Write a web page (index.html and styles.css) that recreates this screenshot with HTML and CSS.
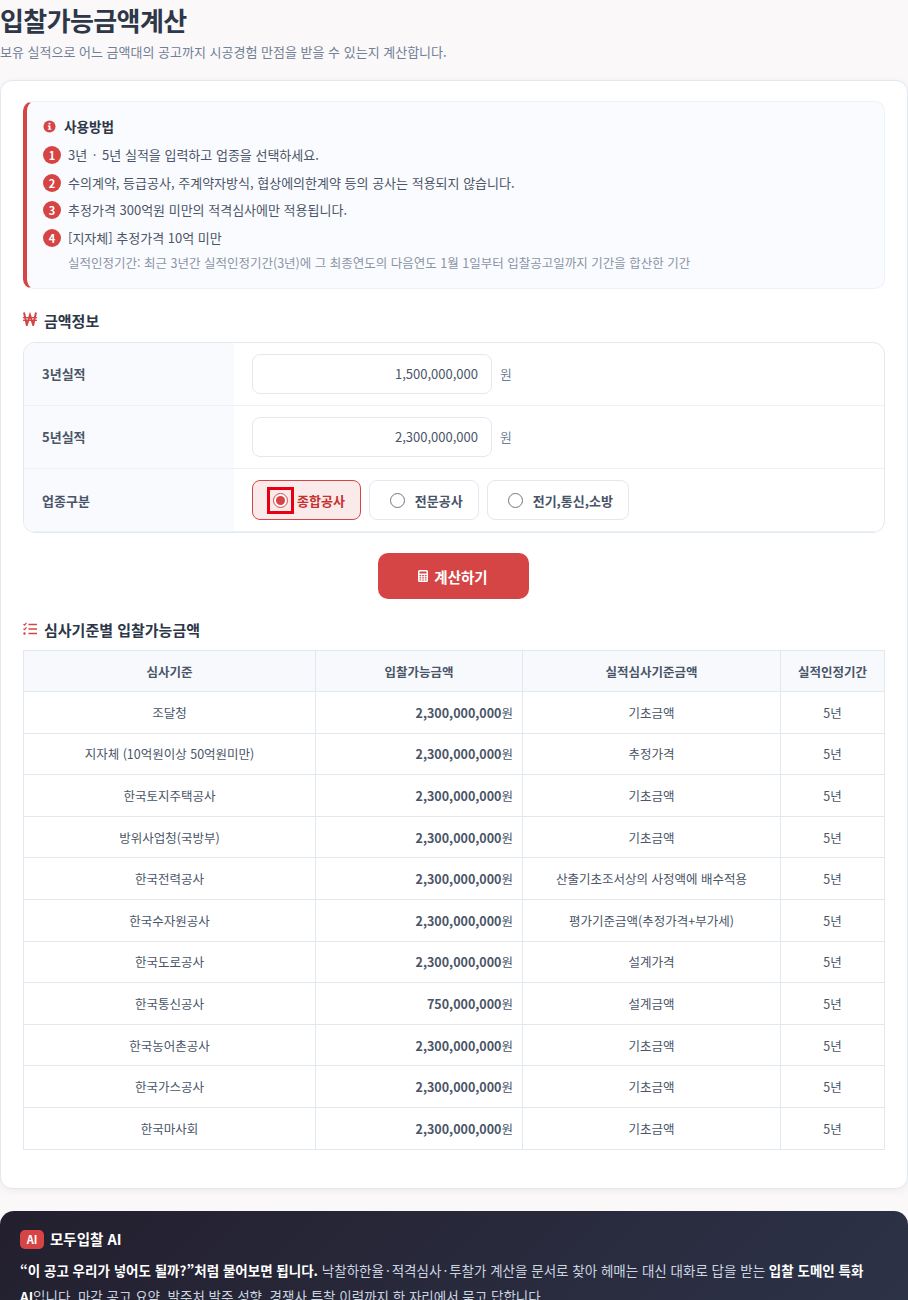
FILE: index.html
```html
<!DOCTYPE html>
<html lang="ko">
<head>
<meta charset="utf-8">
<title>입찰가능금액계산</title>
<link rel="stylesheet" href="styles.css">
</head>
<body>
<header class="page-head">
  <h1>입찰가능금액계산</h1>
  <p>보유 실적으로 어느 금액대의 공고까지 시공경험 만점을 받을 수 있는지 계산합니다.</p>
</header>
<main class="card">
  <section class="guide">
    <h3 class="guide-title">
      <svg class="guide-icon" viewBox="0 0 14 14"><circle cx="7" cy="7" r="6.5" fill="#d64545"/><rect x="6" y="3" width="2" height="1.8" fill="#fff"/><path d="M5.200 6h2.800v3.400h1v1.200H5.200V9.400h1V7.200h-1z" fill="#fff"/></svg>
      사용방법
    </h3>
    <ol class="guide-list">
      <li><span class="num">1</span><span>3년 <span class="dot">·</span> 5년 실적을 입력하고 업종을 선택하세요.</span></li>
      <li><span class="num">2</span><span>수의계약, 등급공사, 주계약자방식, 협상에의한계약 등의 공사는 적용되지 않습니다.</span></li>
      <li><span class="num">3</span><span>추정가격 300억원 미만의 적격심사에만 적용됩니다.</span></li>
      <li><span class="num">4</span><span>[지자체] 추정가격 10억 미만</span></li>
    </ol>
    <p class="guide-note">실적인정기간: 최근 3년간 실적인정기간(3년)에 그 최종연도의 다음연도 1월 1일부터 입찰공고일까지 기간을 합산한 기간</p>
  </section>

  <h3 class="section-title section-first">
    <svg class="sec-icon won-icon" viewBox="0 0 14 14"><path d="M1 .5l2.800 12.500 3.200-10 3.200 10L13 .5" fill="none" stroke="#d64545" stroke-width="2"/><path d="M0 5.600h14M0 8.400h14" fill="none" stroke="#d64545" stroke-width="1.200"/></svg>
    금액정보
  </h3>
  <div class="form-table">
    <div class="form-row">
      <div class="form-label">3년실적</div>
      <div class="form-field"><input class="amount" type="text" value="1,500,000,000"><span class="unit">원</span></div>
    </div>
    <div class="form-row">
      <div class="form-label">5년실적</div>
      <div class="form-field"><input class="amount" type="text" value="2,300,000,000"><span class="unit">원</span></div>
    </div>
    <div class="form-row">
      <div class="form-label">업종구분</div>
      <div class="form-field radios">
        <label class="radio radio-on"><input type="radio" name="k" checked><span>종합공사</span></label>
        <label class="radio"><input type="radio" name="k"><span>전문공사</span></label>
        <label class="radio"><input type="radio" name="k"><span>전기,통신,소방</span></label>
      </div>
    </div>
  </div>
  <div class="action">
    <button class="calc" type="button">
      <svg class="calc-icon" viewBox="0 0 10 12"><path fill-rule="evenodd" d="M1.500 0h7A1.500 1.500 0 0 1 10 1.500v9A1.500 1.500 0 0 1 8.500 12h-7A1.500 1.500 0 0 1 0 10.500v-9A1.500 1.500 0 0 1 1.500 0zM1.500 1.500v2h7v-2zM1.500 5v1.200h1.700V5zM4.200 5v1.200h1.700V5zM6.800 5v1.200h1.700V5zM1.500 7.200v1.200h1.700V7.200zM4.200 7.200v1.200h1.700V7.200zM6.800 7.200v1.200h1.700V7.200zM1.500 9.400v1.100h1.700V9.400zM4.200 9.400v1.100h1.700V9.400zM6.800 9.400v1.100h1.700V9.400z" fill="#fff"/></svg>
      계산하기
    </button>
  </div>
  <h3 class="section-title">
    <svg class="sec-icon" viewBox="0 0 14 14"><path d="M5.500 2.500H14M5.500 7H14M5.500 11.500H14" stroke="#d64545" stroke-width="1.600" fill="none"/><path d="M.5 2.200l1 1L3.500.8M.5 6.700l1 1 2-2.400" stroke="#d64545" stroke-width="1.200" fill="none"/><circle cx="1.500" cy="11.500" r="1.200" fill="#d64545"/></svg>
    심사기준별 입찰가능금액
  </h3>
  <table class="result">
    <colgroup><col class="c1"><col class="c2"><col class="c3"><col class="c4"></colgroup>
    <thead><tr><th>심사기준</th><th>입찰가능금액</th><th>실적심사기준금액</th><th>실적인정기간</th></tr></thead>
    <tbody>
      <tr><td>조달청</td><td class="money"><b>2,300,000,000</b>원</td><td>기초금액</td><td>5년</td></tr>
      <tr><td>지자체 (10억원이상 50억원미만)</td><td class="money"><b>2,300,000,000</b>원</td><td>추정가격</td><td>5년</td></tr>
      <tr><td>한국토지주택공사</td><td class="money"><b>2,300,000,000</b>원</td><td>기초금액</td><td>5년</td></tr>
      <tr><td>방위사업청(국방부)</td><td class="money"><b>2,300,000,000</b>원</td><td>기초금액</td><td>5년</td></tr>
      <tr><td>한국전력공사</td><td class="money"><b>2,300,000,000</b>원</td><td>산출기초조서상의 사정액에 배수적용</td><td>5년</td></tr>
      <tr><td>한국수자원공사</td><td class="money"><b>2,300,000,000</b>원</td><td>평가기준금액(추정가격+부가세)</td><td>5년</td></tr>
      <tr><td>한국도로공사</td><td class="money"><b>2,300,000,000</b>원</td><td>설계가격</td><td>5년</td></tr>
      <tr><td>한국통신공사</td><td class="money"><b>750,000,000</b>원</td><td>설계금액</td><td>5년</td></tr>
      <tr><td>한국농어촌공사</td><td class="money"><b>2,300,000,000</b>원</td><td>기초금액</td><td>5년</td></tr>
      <tr><td>한국가스공사</td><td class="money"><b>2,300,000,000</b>원</td><td>기초금액</td><td>5년</td></tr>
      <tr><td>한국마사회</td><td class="money"><b>2,300,000,000</b>원</td><td>기초금액</td><td>5년</td></tr>
    </tbody>
  </table>
</main>
<aside class="promo">
  <h4 class="promo-title"><span class="ai">AI</span>모두입찰 AI</h4>
  <p class="promo-text"><strong>“이 공고 우리가 넣어도 될까?”처럼 물어보면 됩니다.</strong> 낙찰하한율<span class="dot">·</span>적격심사<span class="dot">·</span>투찰가 계산을 문서로 찾아 헤매는 대신 대화로 답을 받는 <strong>입찰 도메인 특화 AI</strong>입니다. 마감 공고 요약, 발주처 발주 성향, 경쟁사 투찰 이력까지 한 자리에서 묻고 답합니다.</p>
</aside>
</body>
</html>
```
FILE: styles.css
```css
* { box-sizing: border-box; }
html, body { height: 1300px; overflow: hidden; }
body {
  margin: 0;
  background: #faf8f9;
  font-family: "Noto Sans CJK KR", "Noto Sans", sans-serif;
  color: #2d3748;
}
.page-head { height: 80px; }
.page-head h1 {
  margin: 0;
  padding-top: 1px;
  font-size: 26px;
  line-height: 38px;
  font-weight: 700;
  letter-spacing: -0.6px;
  color: #2d3748;
}
.page-head p {
  margin: 3px 0 0;
  font-size: 13px;
  line-height: 20px;
  color: #718096;
}
.card {
  height: 1109px;
  background: #fff;
  border: 1px solid #e2e8f0;
  border-radius: 12px;
  padding: 20px 22px;
  box-shadow: 0 2px 8px rgba(0,0,0,.05);
}
.guide {
  height: 188px;
  background: #fafbfe;
  border: 1px solid #edf2f7;
  border-left: 4px solid #d64545;
  border-radius: 10px;
  padding: 14px 16px;
}
.guide-title {
  display: flex;
  align-items: center;
  gap: 8px;
  margin: 0 0 9px;
  font-size: 13.6px;
  line-height: 20px;
  font-weight: 700;
  color: #2d3748;
}
.guide-icon { width: 13px; height: 13px; }
.guide-list { list-style: none; margin: 0; padding: 0; display: flex; flex-direction: column; gap: 7.600px; }
.guide-list li { display: flex; align-items: center; gap: 7px; font-size: 13px; line-height: 20px; color: #4a5568; }
.dot { margin: 0 2px; }
.num {
  width: 18px; height: 18px; border-radius: 50%;
  background: #d64545; color: #fff;
  font-size: 11px; font-weight: 700; line-height: 18px; text-align: center;
}
.guide-note { margin: 6px 0 0 25px; font-size: 12.500px; line-height: 18px; color: #8a94a6; }
.section-title {
  display: flex; align-items: center; gap: 7px;
  margin: 0;
  font-size: 15px; line-height: 22px; font-weight: 700; color: #2d3748;
}
.section-first { margin-top: 21px; margin-bottom: 10px; }
.sec-icon { width: 14px; height: 14px; margin-top: -3px; }
.won-icon { margin-top: -5px; }
.form-table { border: 1px solid #e2e8f0; border-radius: 12px; overflow: hidden; }
.form-row { display: flex; height: 63px; border-bottom: 1px solid #edf2f7; }
.form-label {
  width: 210px; background: #f8fafd; padding: 0 0 2px 18px;
  display: flex; align-items: center;
  font-size: 13px; font-weight: 700; color: #4a5568;
}
.form-row:last-child .form-label { padding-bottom: 0; }
.form-field { display: flex; align-items: center; padding-left: 18px; gap: 8px; }
.amount {
  width: 240px; height: 40px; border: 1px solid #e2e8f0; border-radius: 8px;
  background: #fff; text-align: right; padding: 0 13px 2px;
  font: 13px "Noto Sans CJK KR", sans-serif; color: #4a5568; outline: none;
}
.unit { font-size: 12.800px; color: #718096; margin-bottom: 2px; }
.radios { gap: 8px; }
.radio {
  display: flex; align-items: center; justify-content: center; gap: 10px;
  height: 40px; padding: 0 15px 0 20px;
  border: 1px solid #e2e8f0; border-radius: 8px; background: #fff;
  font-size: 13px; font-weight: 700; color: #4a5568;
}
.radio input { width: 15px; height: 15px; margin: 0; accent-color: #d64545; }
.radio-on { background: #fbeaea; border-color: #d64545; color: #c53030; gap: 9px; }
.radio-on input { outline: 3px solid #e60012; outline-offset: 3px; }
.action { display: flex; justify-content: center; margin-top: 20px; margin-bottom: 20px; padding-right: 2px; }
.calc {
  width: 151px; height: 46px; border: 0; border-radius: 10px;
  background: #d64545; color: #fff;
  font: 700 14.500px "Noto Sans CJK KR", sans-serif;
  display: flex; align-items: center; justify-content: center; gap: 6px;
}
.calc-icon { width: 10px; height: 12px; }
.result { width: 100%; margin-top: 9px; border-collapse: collapse; table-layout: fixed; font-size: 12.500px; color: #4a5568; }
.c1 { width: 292px; } .c2 { width: 207px; } .c3 { width: 258px; }
.result th, .result td { border: 1px solid #e2e8f0; text-align: center; padding: 0 8px; }
.result th { height: 41px; background: #f7f9fc; font-weight: 700; }
.result td { height: 41.600px; font-weight: 400; }
.result td.money { text-align: right; padding-right: 9px; }
.result b { font-weight: 700; }
.promo {
  margin-top: 22px; height: 120px;
  background: linear-gradient(135deg, #231f2e, #2d3348);
  border-radius: 14px 14px 0 0; padding: 18px 36px 17px 20px; color: #cbd5e0;
}
.promo-title { display: flex; align-items: center; gap: 6px; margin: 0; font-size: 14.500px; line-height: 20px; font-weight: 700; color: #fff; }
.ai { background: #d64545; border-radius: 5px; width: 24px; height: 19px; font-size: 11px; line-height: 19px; text-align: center; }
.promo-text { margin: 8px 0 0; font-size: 13.500px; line-height: 26px; }
.promo-text strong { color: #fff; font-weight: 700; }
```
